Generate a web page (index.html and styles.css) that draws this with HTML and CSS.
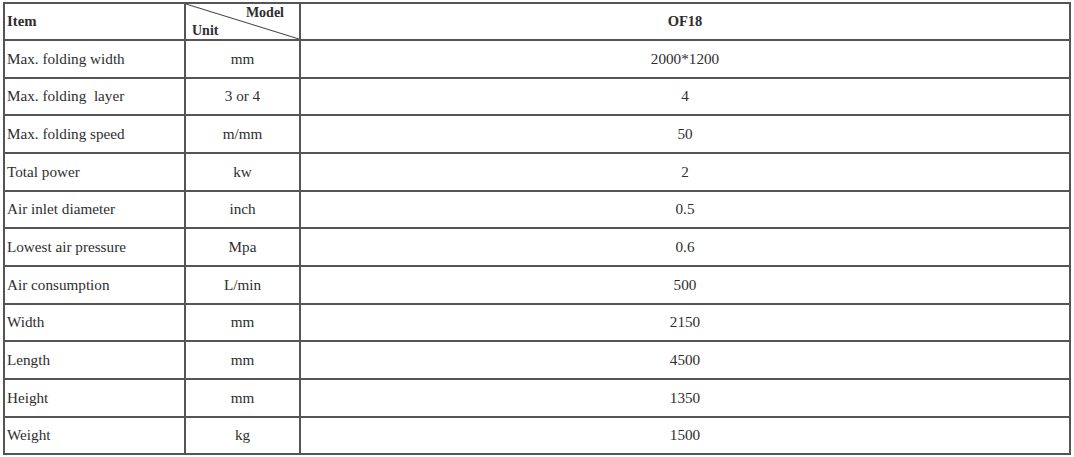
FILE: index.html
```html
<!DOCTYPE html>
<html>
<head>
<meta charset="utf-8">
<link rel="stylesheet" href="styles.css">
</head>
<body>
<table class="spec">
  <colgroup>
    <col class="c-item">
    <col class="c-unit">
    <col class="c-val">
  </colgroup>
  <tr class="head">
    <td class="item-h">Item</td>
    <td class="diag">
      <div class="diag-inner">
        <span class="model">Model</span>
        <span class="unit">Unit</span>
      </div>
    </td>
    <td class="val bold">OF18</td>
  </tr>
  <tr><td>Max. folding width</td><td class="ctr">mm</td><td class="val">2000*1200</td></tr>
  <tr><td>Max. folding&nbsp; layer</td><td class="ctr">3 or 4</td><td class="val">4</td></tr>
  <tr><td>Max. folding speed</td><td class="ctr">m/mm</td><td class="val">50</td></tr>
  <tr><td>Total power</td><td class="ctr">kw</td><td class="val">2</td></tr>
  <tr><td>Air inlet diameter</td><td class="ctr">inch</td><td class="val">0.5</td></tr>
  <tr><td>Lowest air pressure</td><td class="ctr">Mpa</td><td class="val">0.6</td></tr>
  <tr><td>Air consumption</td><td class="ctr">L/min</td><td class="val">500</td></tr>
  <tr><td>Width</td><td class="ctr">mm</td><td class="val">2150</td></tr>
  <tr><td>Length</td><td class="ctr">mm</td><td class="val">4500</td></tr>
  <tr><td>Height</td><td class="ctr">mm</td><td class="val">1350</td></tr>
  <tr><td>Weight</td><td class="ctr">kg</td><td class="val">1500</td></tr>
</table>
</body>
</html>
```
FILE: styles.css
```css
html, body {
  margin: 0;
  padding: 0;
  background: #ffffff;
}
body {
  font-family: "Liberation Serif", "Times New Roman", serif;
  font-size: 15.2px;
  color: #2e2e2e;
}
.spec {
  border-collapse: collapse;
  margin: 2px 0 0 3px;
  width: 1066px;
  table-layout: fixed;
}
.c-item { width: 181px; }
.c-unit { width: 115px; }
.c-val { width: 770px; }
.spec td {
  border: 2px solid #555555;
  height: 37.66px;
  padding: 0 0 0 2px;
  vertical-align: middle;
  white-space: nowrap;
  box-sizing: border-box;
}
.spec tr.head td {
  height: 35px;
}
.spec td.ctr,
.spec td.val {
  text-align: center;
  padding: 0;
}
.bold, .item-h {
  font-weight: bold;
  font-size: 14.5px;
}
.item-h {
  font-size: 14.8px;
}
.spec td.diag {
  padding: 0;
  background: linear-gradient(to top right, transparent calc(50% - 1px), #444444 50%, transparent calc(50% + 1px));
}
.diag-inner {
  display: flex;
  flex-direction: column;
  font-weight: bold;
  font-size: 14px;
  height: 35px;
}
.model {
  align-self: flex-end;
  margin: 1px 15px 0 0;
  line-height: 15px;
}
.unit {
  align-self: flex-start;
  margin: 3px 0 0 6px;
  line-height: 15px;
}
```
